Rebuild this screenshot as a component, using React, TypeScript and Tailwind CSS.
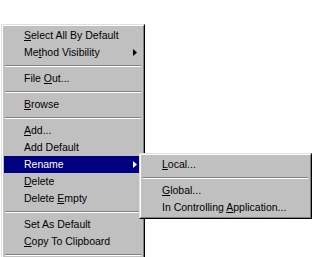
import React from "react";

type Item =
  | { type: "sep" }
  | { type: "item"; pre: string; u?: string; post?: string; arrow?: boolean; active?: boolean };

const mainItems: Item[] = [
  { type: "item", pre: "", u: "S", post: "elect All By Default" },
  { type: "item", pre: "Me", u: "t", post: "hod Visibility", arrow: true },
  { type: "sep" },
  { type: "item", pre: "File ", u: "O", post: "ut..." },
  { type: "sep" },
  { type: "item", pre: "", u: "B", post: "rowse" },
  { type: "sep" },
  { type: "item", pre: "", u: "A", post: "dd..." },
  { type: "item", pre: "Add Default" },
  { type: "item", pre: "Rename", arrow: true, active: true },
  { type: "item", pre: "", u: "D", post: "elete" },
  { type: "item", pre: "Delete ", u: "E", post: "mpty" },
  { type: "sep" },
  { type: "item", pre: "Set As Default" },
  { type: "item", pre: "", u: "C", post: "opy To Clipboard" },
  { type: "sep" },
];

const subItems: Item[] = [
  { type: "item", pre: "", u: "L", post: "ocal..." },
  { type: "sep" },
  { type: "item", pre: "", u: "G", post: "lobal..." },
  { type: "item", pre: "In Controlling ", u: "A", post: "pplication..." },
];

function Arrow({ white }: { white?: boolean }) {
  return (
    <svg width="4" height="7" viewBox="0 0 4 7" className="block">
      <path d="M0 0 L4 3.5 L0 7 Z" fill={white ? "#ffffff" : "#000000"} />
    </svg>
  );
}

function Rows({ items }: { items: Item[] }) {
  return (
    <>
      {items.map((it, i) =>
        it.type === "sep" ? (
          <div key={i} className="h-[9px] flex flex-col justify-center px-[1px]">
            <div className="h-[1px] bg-[#808080]" />
            <div className="h-[1px] bg-white" />
          </div>
        ) : (
          <div
            key={i}
            className={`h-[17px] flex items-center pl-[20px] pr-[5px] ${
              it.active ? "bg-[#000080] text-white" : "text-black"
            }`}
          >
            <span className="flex-1 whitespace-pre leading-none">
              {it.pre}
              {it.u && <span className="underline underline-offset-[1px]">{it.u}</span>}
              {it.post}
            </span>
            {it.arrow && <Arrow white={it.active} />}
          </div>
        )
      )}
    </>
  );
}

function MenuBox({ children, className }: { children: React.ReactNode; className?: string }) {
  return (
    <div
      className={`bg-[#c0c0c0] border border-t-[#dfdfdf] border-l-[#dfdfdf] border-b-black border-r-black ${className ?? ""}`}
    >
      <div className="border border-t-white border-l-white border-b-[#808080] border-r-[#808080] py-[1px] px-[1px]">
        {children}
      </div>
    </div>
  );
}

export default function App() {
  return (
    <div
      className="relative w-[313px] h-[257px] bg-white overflow-hidden text-[10.5px]"
      style={{ fontFamily: '"Liberation Sans", Arial, sans-serif' }}
    >
      <div className="pt-[24px] pl-[1px]">
        <MenuBox className="w-[144px]">
          <Rows items={mainItems} />
        </MenuBox>
      </div>
      <div className="absolute left-[139px] top-[153px]">
        <MenuBox className="w-[173px]">
          <Rows items={subItems} />
        </MenuBox>
      </div>
    </div>
  );
}
